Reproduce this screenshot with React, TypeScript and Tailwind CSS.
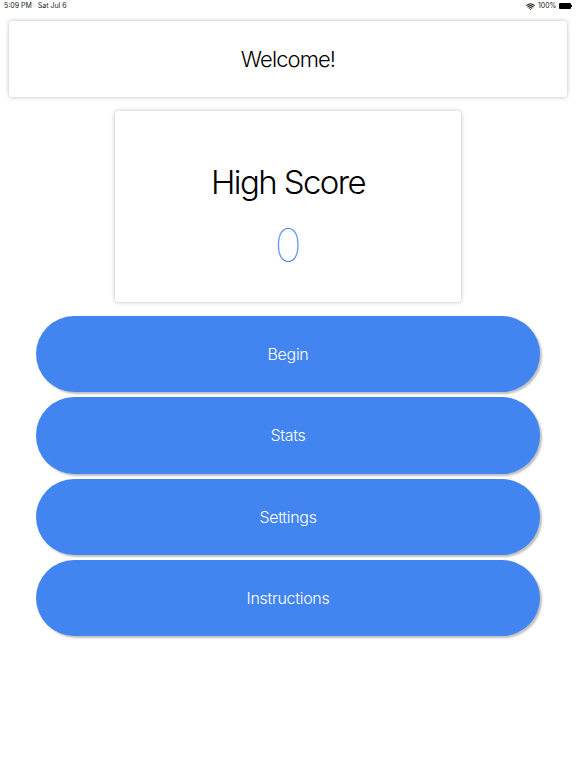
import { Wifi } from "lucide-react";

const buttons = ["Begin", "Stats", "Settings", "Instructions"];

export default function App() {
  return (
    <div className="relative h-[768px] w-[576px] overflow-hidden bg-white font-['Inter',sans-serif]">
      {/* Status bar */}
      <div className="flex h-[12px] items-center justify-between pl-[4px] pr-[4px] text-[7px] text-[#222]">
        <div className="flex gap-[6px]">
          <span>5:09 PM</span>
          <span>Sat Jul 6</span>
        </div>
        <div className="flex items-center gap-[2.5px]">
          <Wifi className="h-[9px] w-[9px]" strokeWidth={3} />
          <span>100%</span>
          <div className="flex items-center">
            <div className="h-[6px] w-[12px] rounded-[1px] bg-black" />
            <div className="h-[2px] w-[1px] bg-black" />
          </div>
        </div>
      </div>

      <div className="flex flex-col items-center pt-[9px]">
        {/* Welcome */}
        <div className="flex h-[76px] w-[558px] items-center justify-center rounded-[3px] bg-white text-[22px] font-light tracking-[-0.9px] text-black shadow-[0_0_4px_rgba(0,0,0,0.28)]">
          Welcome!
        </div>

        {/* High score */}
        <div className="mt-[14px] flex h-[191px] w-[346px] flex-col items-center rounded-[3px] bg-white shadow-[0_0_4px_rgba(0,0,0,0.28)]">
          <div className="mt-[50px] text-[33px] leading-[42px] font-light tracking-[-1.6px] text-black">
            High Score
          </div>
          <div className="mt-[16px] text-[46px] leading-[52px] font-thin text-[#4285f4]">0</div>
        </div>

        {/* Menu */}
        <div className="mt-[14px] flex flex-col gap-[5px]">
          {buttons.map((label) => (
            <button
              key={label}
              className="flex h-[76.25px] w-[504px] items-center justify-center rounded-[38px] bg-[#4285f0] text-[16px] font-light tracking-[-0.3px] text-white shadow-[2px_2px_2px_rgba(0,0,0,0.25)]"
            >
              {label}
            </button>
          ))}
        </div>
      </div>
    </div>
  );
}
